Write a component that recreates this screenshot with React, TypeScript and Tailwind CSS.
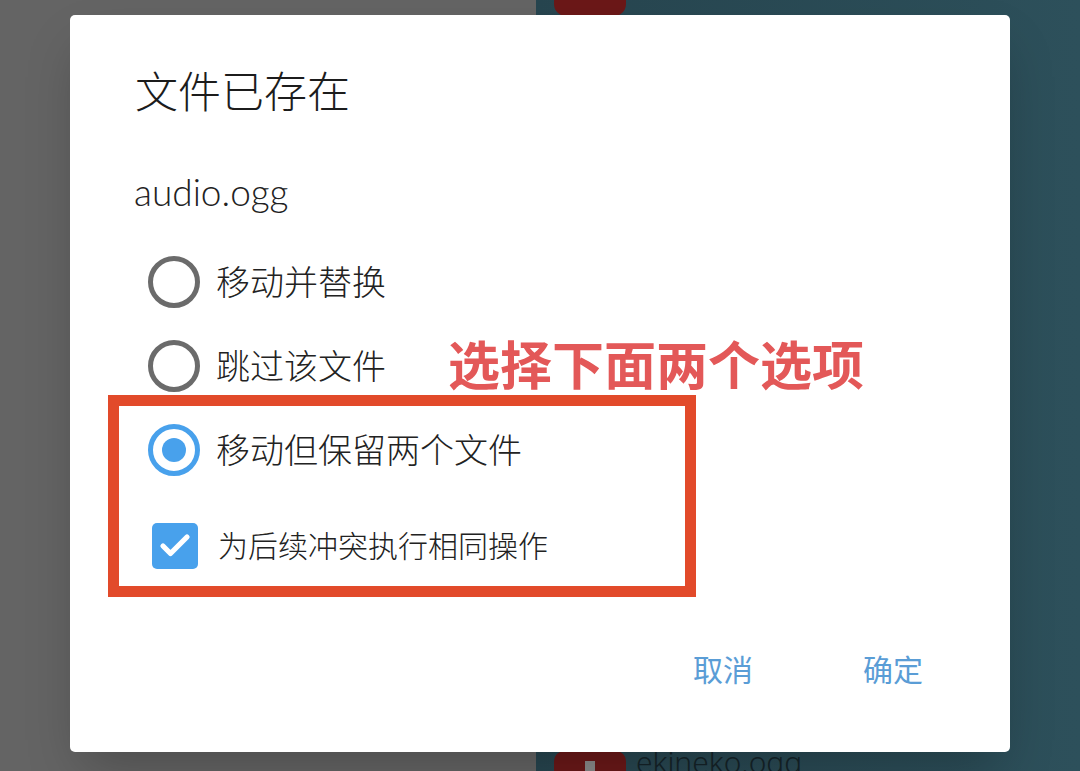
import { Check } from "lucide-react";

const font = { fontFamily: '"Noto Sans", "Noto Sans CJK SC", sans-serif' };

interface RadioRowProps {
  label: string;
  checked?: boolean;
}

function RadioRow({ label, checked }: RadioRowProps) {
  return (
    <div className="flex items-center h-[84px] pl-[78px] gap-[16px]">
      {checked ? (
        <div className="w-[52px] h-[52px] rounded-full border-[5px] border-[#48a1ec] flex items-center justify-center">
          <div className="w-[24px] h-[24px] rounded-full bg-[#48a1ec]" />
        </div>
      ) : (
        <div className="w-[52px] h-[52px] rounded-full border-[5px] border-[#6b6b6b]" />
      )}
      <span className="text-[34px] leading-[40px] font-light text-[#222]">{label}</span>
    </div>
  );
}

export default function App() {
  return (
    <div className="relative w-[1080px] h-[771px] overflow-hidden flex" style={font}>
      {/* page behind the dialog */}
      <div className="w-[536px] h-full bg-[#646464]" />
      <div className="flex-1 h-full bg-gradient-to-r from-[#27454f] to-[#2d505b] flex flex-col justify-between">
        <div className="flex items-center gap-[10px] pl-[18px] -mt-[56px]">
          <div className="w-[72px] h-[72px] rounded-[12px] bg-[#6b1818]" />
        </div>
        <div className="flex items-start gap-[10px] pl-[18px] mb-[-52px]">
          <div className="w-[72px] h-[72px] rounded-[10px] bg-[#6b1818] flex justify-center pt-[10px]">
            <div className="w-[10px] h-[10px] bg-[#8a8a8a]" />
          </div>
          <span className="text-[30px] leading-[30px] font-light text-[#152328] -mt-[4px]">ekineko.ogg</span>
        </div>
      </div>

      {/* dialog */}
      <div className="absolute left-[70px] top-[15px] w-[940px] h-[737px] bg-white rounded-[5px] shadow-2xl flex flex-col">
        <div className="pt-[52px] pl-[65px] text-[43px] leading-[50px] text-[#1c1c1c] font-light">文件已存在</div>
        <div
          className="mt-[55px] pl-[64px] text-[37px] leading-[40px] font-light text-[#222]"
          style={{ fontFamily: "Lato, Roboto, sans-serif" }}
        >
          audio.ogg
        </div>
        <div className="mt-[28px] flex flex-col">
          <RadioRow label="移动并替换" />
          <RadioRow label="跳过该文件" />
          <RadioRow label="移动但保留两个文件" checked />
          <div className="flex items-center h-[84px] mt-[12px] pl-[82px] gap-[20px]">
            <div className="w-[46px] h-[46px] rounded-[5px] bg-[#48a1ec] flex items-center justify-center">
              <Check className="w-[36px] h-[36px] text-white" strokeWidth={3.5} />
            </div>
            <span className="text-[30px] leading-[40px] font-light text-[#222]">为后续冲突执行相同操作</span>
          </div>
        </div>
        <div className="mt-[62px] flex justify-end gap-[110px] pr-[87px] text-[30px] leading-[40px] text-[#5a9dd6]">
          <span>取消</span>
          <span>确定</span>
        </div>

        {/* annotation */}
        <div className="absolute left-[38px] top-[380px] w-[588px] h-[202px] border-[11px] border-[#e24a2a]" />
        <div className="absolute left-[378px] top-[324px] text-[52px] leading-[52px] font-bold text-[#e35858] whitespace-nowrap">
          选择下面两个选项
        </div>
      </div>
    </div>
  );
}
